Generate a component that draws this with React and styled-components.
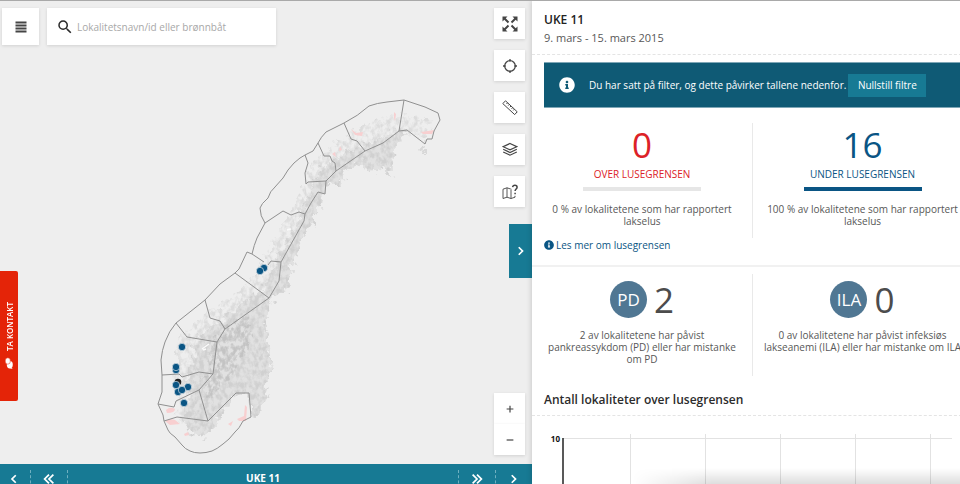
import React from "react";
import styled, { createGlobalStyle } from "styled-components";
import { MdSearch } from "react-icons/md";
import { FaInfoCircle } from "react-icons/fa";

const teal = "#177a94";
const blue = "#0a5584";
const red = "#dc2127";
const sidePadding = 12;

const GlobalStyle = createGlobalStyle`
  * {
    box-sizing: border-box;
  }
  body {
    margin: 0;
    overflow: hidden;
    font-family: "Open Sans", "Noto Sans", sans-serif;
    font-size: 10px;
    color: #575757;
  }
  button,
  input {
    font-family: inherit;
    font-size: inherit;
    border: 0;
    padding: 0;
  }
  button {
    cursor: pointer;
  }
  h1,
  h2,
  p {
    margin: 0;
  }
`;

const Page = styled.div`
  display: grid;
  grid-template-columns: minmax(0, 1fr) 440px;
  width: calc(100% + ${sidePadding}px);
  height: 100vh;
  border-top: 1px solid #a9a9a9;
  overflow: hidden;
`;

const MapColumn = styled.main`
  display: flex;
  flex-direction: column;
  min-height: 0;
`;

const MapArea = styled.div`
  position: relative;
  flex: 1;
  min-height: 0;
  background: #eeeeee;
`;

const MapDrawing = styled.svg`
  position: absolute;
  inset: 0;
  width: 100%;
  height: 100%;
`;

const MapOverlay = styled.div`
  position: absolute;
  inset: 0;
  display: flex;
  justify-content: space-between;
  align-items: flex-start;
  padding: 7px 7px 9px 2px;
`;

const SearchRow = styled.div`
  display: flex;
  gap: 8px;
`;

const ToolButton = styled.button`
  display: flex;
  align-items: center;
  justify-content: center;
  width: ${(props) => props.$size || 31}px;
  height: ${(props) => props.$size || 31}px;
  background: white;
  color: #454545;
  box-shadow: 0 1px 3px rgba(0, 0, 0, 0.12);
`;

const SearchBox = styled.label`
  display: flex;
  align-items: center;
  gap: 3px;
  width: 229px;
  height: 37px;
  padding: 0 9px;
  background: white;
  color: #2a2a2a;
  box-shadow: 0 1px 3px rgba(0, 0, 0, 0.12);
`;

const SearchInput = styled.input`
  flex: 1;
  min-width: 0;
  outline: 0;
  background: transparent;
  &::placeholder {
    color: #a8a8a8;
    opacity: 1;
  }
`;

const Tools = styled.div`
  display: flex;
  flex-direction: column;
  justify-content: space-between;
  height: 100%;
`;

const ToolGroup = styled.div`
  display: flex;
  flex-direction: column;
  gap: ${(props) => props.$gap}px;
`;

const PanelToggle = styled.button`
  position: absolute;
  right: 0;
  top: 223px;
  display: flex;
  align-items: center;
  justify-content: center;
  width: 23px;
  height: 54px;
  background: ${teal};
  color: white;
`;

const ContactTab = styled.button`
  position: absolute;
  left: 0;
  top: 270px;
  display: flex;
  align-items: center;
  justify-content: center;
  gap: 6px;
  width: 18px;
  height: 130px;
  border-radius: 2px 0 0 2px;
  background: #e42408;
  color: white;
  font-size: 8px;
  font-weight: 600;
  writing-mode: vertical-rl;
  transform: rotate(180deg);
`;

const WeekBar = styled.nav`
  display: flex;
  height: 20px;
  overflow: hidden;
  background: ${teal};
  color: white;
`;

const WeekStep = styled.button`
  display: flex;
  align-items: center;
  justify-content: center;
  width: ${(props) => props.$width || 36}px;
  height: 29px;
  background: transparent;
  color: white;
`;

const WeekDivider = styled.div`
  height: 29px;
  margin-top: 6px;
  border-left: 1px dashed #6fb0c0;
`;

const WeekLabel = styled.div`
  flex: 1;
  text-align: center;
  font-weight: 700;
  line-height: 28px;
`;

const Panel = styled.aside`
  position: relative;
  background: white;
  box-shadow: -1px 0 5px rgba(0, 0, 0, 0.15);
  overflow: hidden;
`;

const WeekHeader = styled.header`
  height: 54px;
  padding: 10px ${sidePadding}px 0;
  border-bottom: 1px dashed #e4e4e4;
`;

const Title = styled.h1`
  font-size: 12px;
  line-height: 18px;
  font-weight: 600;
  color: #222;
`;

const Dates = styled.p`
  font-size: 11px;
  line-height: 18px;
`;

const Notice = styled.div`
  display: flex;
  align-items: center;
  height: 46px;
  margin: 7px 0 0 ${sidePadding}px;
  padding-left: 15px;
  border: solid #7fa7b7;
  border-width: 1px 0;
  background: #0f5a75;
  color: white;
`;

const NoticeText = styled.span`
  margin: 0 2px 0 14px;
  white-space: nowrap;
`;

const ResetButton = styled.button`
  width: 78px;
  height: 23px;
  background: ${teal};
  color: white;
`;

const StatRow = styled.section`
  display: grid;
  grid-template-columns: 1fr 1fr;
  padding-top: ${(props) => props.$top}px;
`;

const Stat = styled.div`
  display: flex;
  flex-direction: column;
  align-items: center;
  height: ${(props) => props.$height}px;
  padding: 0 10px;
  text-align: center;
  & + & {
    border-left: 1px solid #e9e9e9;
  }
`;

const BigNumber = styled.div`
  font-size: 35px;
  line-height: 44px;
  color: ${(props) => props.$color || "#4c4c4c"};
`;

const StatLabel = styled.div`
  line-height: 14px;
  color: ${(props) => props.$color};
`;

const StatBar = styled.div`
  width: 118px;
  height: 4px;
  margin: 6px 0 12px;
  background: ${(props) => props.$color};
`;

const StatText = styled.p`
  line-height: 12px;
`;

const Disease = styled.div`
  display: flex;
  align-items: center;
  gap: 7px;
  height: 37px;
  margin: 7px 0 11px;
`;

const DiseaseBadge = styled.div`
  width: 37px;
  height: 37px;
  border-radius: 50%;
  background: #507793;
  color: white;
  font-size: 17px;
  line-height: 37px;
`;

const MoreLink = styled.a`
  display: flex;
  align-items: center;
  gap: 2px;
  height: 14px;
  padding-left: ${sidePadding}px;
  color: ${blue};
  text-decoration: none;
`;

const SectionLine = styled.div`
  height: 2px;
  margin-top: 13px;
  background: #f1f1f1;
`;

const ChartTitle = styled.h2`
  height: 40px;
  padding: 15px ${sidePadding}px 0;
  border-bottom: 1px dashed #e4e4e4;
  font-size: 12px;
  line-height: 18px;
  font-weight: 600;
  color: #2c2c2c;
`;

const Chart = styled.svg`
  display: block;
  width: 100%;
  height: 120px;
  text {
    font-size: 8px;
    font-weight: 700;
    fill: #111;
  }
`;

const BottomShade = styled.div`
  position: absolute;
  left: 100px;
  right: 0;
  bottom: 0;
  height: 16px;
  background: linear-gradient(transparent, rgba(0, 0, 0, 0.13));
  mask-image: linear-gradient(to right, transparent, black 80px);
`;

function Line({ size = 16, width = 1, children, ...rest }) {
  return (
    <svg
      width={size}
      height={size}
      viewBox="0 0 16 16"
      fill="none"
      stroke="currentColor"
      strokeWidth={width}
      {...rest}
    >
      {children}
    </svg>
  );
}

const MenuIcon = () => (
  <Line width={2}>
    <path d="M2.500 3.500h11M2.500 6.500h11M2.500 9.500h11M2.500 12.500h11" />
  </Line>
);

const ExpandIcon = () => (
  <Line width={2}>
    <path d="M2 2l4.500 4.500M14 2L9.500 6.500M2 14l4.500-4.500M14 14l-4.500-4.500" />
    <path
      d="M.5.500h5l-5 5zM15.500.500v5l-5-5zM.5 15.500v-5l5 5zM15.500 15.500h-5l5-5z"
      fill="currentColor"
      stroke="none"
    />
  </Line>
);

const TargetIcon = () => (
  <Line width={1.3}>
    <circle cx="8" cy="8" r="5.300" />
    <path d="M8 1v2.600M8 12.400V15M1 8h2.600M12.400 8H15" />
  </Line>
);

const RulerIcon = () => (
  <Line width={1}>
    <path d="M3.500.800L15.200 11.800l-2.500 2.800L.800 3.600z" />
    <path d="M5.600 2.800L4.500 4M7.300 4.400L6.200 5.600M9 6L7.900 7.200M10.700 7.600L9.600 8.800M12.400 9.200l-1.100 1.200" />
  </Line>
);

const LayersIcon = () => (
  <Line width={1.2}>
    <path d="M8 1.500l6.800 3.200L8 7.900 1.200 4.700z" />
    <path d="M1.200 7.300L8 10.500l6.800-3.200M1.200 10L8 13.200l6.800-3.200" />
  </Line>
);

const MapHelpIcon = () => (
  <Line width={0.9}>
    <path d="M9.500 5.300L8.600 5 5 3.800 1 5.200v9.300l4-1.300 4 1.300 4-1.300v-1.400M5 3.800v9.400M9 6v8.500" />
    <path
      d="M10.600 3.200c.2-1.500 1.200-2 2.300-2 1.300 0 2.200.8 2.200 2 0 1.700-2 1.900-2 3.800M13.100 8.800v1.500"
      strokeWidth="1.500"
    />
  </Line>
);

const ChevronRight = () => (
  <Line size={12} width={2.3}>
    <path d="M5 3L10 8 5 13" />
  </Line>
);

const ChevronLeft = () => (
  <Line size={12} width={2.3}>
    <path d="M9 3L4 8l5 5" />
  </Line>
);

const DoubleRight = () => (
  <Line size={14} width={2}>
    <path d="M3 3L8 8l-5 5M8 3L13 8 8 13" />
  </Line>
);

const DoubleLeft = () => (
  <Line size={14} width={2}>
    <path d="M8 3L3 8 8 13M13 3L8 8l5 5" />
  </Line>
);

const PlusIcon = () => (
  <Line size={12} width={1.6}>
    <path d="M8 3.500v9M3.500 8h9" />
  </Line>
);

const MinusIcon = () => (
  <Line size={12} width={1.6}>
    <path d="M3.500 8h9" />
  </Line>
);

const ChatIcon = () => (
  <svg width="8" height="12" viewBox="0 0 8 12" fill="currentColor">
    <ellipse cx="3.200" cy="4.200" rx="3" ry="3.700" />
    <path d="M1 1l-.5-1 3 1z" />
    <ellipse cx="5.200" cy="8" rx="2.600" ry="3.200" stroke="#e42408" strokeWidth=".5" />
  </svg>
);

// production area borders along the coast
const coast =
  "M305 155L313 151 318 143 Q321 137 326 132L344 123Q358 116 369 106Q377 103 387 102L404 100 425 107 438 113 440 120 434 131 432 139 427 139 425 144 407 130 399 131 383 143 365 151 336 171 326 181 325 194 318 192 311 203 305 214 304 221 281 262 279 281 269 298 225 329 217 342 213 374 199 390 208 421 236 393 249 393 251 417 243 421Q239 429 235 432Q229 440 223 444Q217 449 212 451Q206 453 200 453Q194 453 190 451Q185 449 182 445L175 437Q169 433 168 430L164 421 163 415 158 404 162 392 162 375 161 360Q162 350 165 342Q169 331 176 323L205 300 220 284 235 273 239 269 247 252 252 254Q254 245 257 238L265 223Q260 216 260 208Q261 204 268 198Q270 191 275 187L283 178 288 170Q294 162 300 158z";

const borders = [
  "M404 100L399 131",
  "M344 123L351 139 357 141 365 151",
  "M318 143L324 156 330 156 332 161 335 163 336 171",
  "M305 155L308 163 305 173 306 184 308 182 326 181",
  "M265 223L283 211 291 215 299 212 305 214",
  "M252 254L264 262M268 265L271 261 281 262",
  "M235 273L269 298",
  "M205 300L210 318 220 321 225 329",
  "M176 323L187 337 217 342",
  "M162 375L179 374 182 377 199 372 213 374",
  "M158 404L174 407 176 401 199 390",
  "M164 421L177 417 208 421",
];

// outer skerries, the mainland and the high ground inland
const skerries =
  "M176 340L190 326 212 310 238 292 256 276 266 254 280 228 296 206 304 178 314 160 328 150 346 136 372 122 398 114 424 118 432 126 424 140 406 130 383 143 365 151 336 171 326 184 318 200 300 235 285 275 272 300 232 330 217 345 213 375 206 432 188 432 178 416 176 392 172 376 178 362z";
const mainland =
  "M196 340L214 326 240 306 264 288 276 264 288 240 302 214 310 190 322 168 340 156 360 146 386 136 400 130 408 130 396 142 393 164 390 178 378 168 370 172 362 162 344 172 342 184 328 184 318 208 310 228 302 236 298 254 291 268 289 290 282 292 272 298 266 320 267 345 273 361 267 384 264 400 256 420 246 396 236 394 224 412 206 437 190 432 182 416 190 398 186 384 192 364z";
const highland =
  "M208 345L226 328 248 314 250 340 238 364 226 382 214 396 202 390 210 374z";

const sites = [
  [264, 268],
  [260, 271],
  [182, 347],
  [176, 370],
  [176, 367],
  [188, 387],
  [178, 392],
  [182, 390],
  [176, 385],
  [184, 403],
];

const NorwayMap = () => (
  <MapDrawing viewBox="0 1 532 463" role="img" aria-label="Kart over Norge">
    <defs>
      <filter id="ground" x="-10%" y="-10%" width="120%" height="120%">
        <feTurbulence type="fractalNoise" baseFrequency="0.16" numOctaves="4" seed="4" result="edge" />
        <feDisplacementMap in="SourceGraphic" in2="edge" scale="16" xChannelSelector="R" yChannelSelector="G" />
      </filter>
      <filter id="grain" x="-10%" y="-10%" width="120%" height="120%">
        <feTurbulence type="fractalNoise" baseFrequency="0.16" numOctaves="4" seed="4" result="edge" />
        <feDisplacementMap in="SourceGraphic" in2="edge" scale="16" xChannelSelector="R" yChannelSelector="G" result="shape" />
        <feTurbulence type="fractalNoise" baseFrequency="0.22 0.17" numOctaves="3" seed="9" />
        <feColorMatrix values="0 0 0 0 0  0 0 0 0 0  0 0 0 0 0  3 0 0 0 -1.1" result="speck" />
        <feComposite in="shape" in2="speck" operator="in" />
      </filter>
    </defs>
    <path filter="url(#grain)" fill="#dcdcdc" d={skerries} />
    <path filter="url(#ground)" fill="#dddddd" fillOpacity=".8" d={mainland} />
    <path filter="url(#grain)" fill="#d0d0d0" d={mainland} />
    <path filter="url(#grain)" fill="#c3c3c3" d={highland} />
    <path filter="url(#ground)" fill="#d8d8d8" d="M418 148L426 142 424 156z" />
    <g fill="#f8cfd0">
      <path d="M166 410q4-4 9-1 0 4-8 4zM165 421q5-3 10-1l5 4-10 1zM184 434l4-2 1 3-4 1zM228 424l5-3-2 5zM237 419l7-3 1-11 2 2-1 14-7 0zM351 129l5 4 7-1-1 4-7-1zM394 112l2 2-1 7-1-3zM421 132l7-1 6-1-2 4-9 0zM340 146l2 4-3 1zM332 154l3-2 1 5z" />
    </g>
    <g fill="none" stroke="#909090" strokeWidth="1" strokeLinejoin="round">
      <path d={coast} />
      {borders.map((d) => (
        <path key={d} d={d} />
      ))}
    </g>
    <path d="M202 349l7-5M203 350l3-1M287 230l4-1" stroke="#fafafa" strokeWidth="1.500" />
    <circle cx="178" cy="382" r="3.300" fill="#222" />
    <g fill={blue} stroke="#f4f4f4" strokeWidth=".6">
      {sites.map(([x, y]) => (
        <circle key={`${x}-${y}`} cx={x} cy={y} r="3.700" />
      ))}
    </g>
  </MapDrawing>
);

export default function App() {
  return (
    <>
      <GlobalStyle />
      <Page>
        <MapColumn>
          <MapArea>
            <NorwayMap />
            <MapOverlay>
              <SearchRow>
                <ToolButton $size={37} aria-label="Meny">
                  <MenuIcon />
                </ToolButton>
                <SearchBox>
                  <MdSearch size={18} />
                  <SearchInput
                    aria-label="Søk"
                    placeholder="Lokalitetsnavn/id eller brønnbåt"
                  />
                </SearchBox>
              </SearchRow>
              <Tools>
                <ToolGroup $gap={11}>
                  <ToolButton aria-label="Fullskjerm">
                    <ExpandIcon />
                  </ToolButton>
                  <ToolButton aria-label="Min posisjon">
                    <TargetIcon />
                  </ToolButton>
                  <ToolButton aria-label="Mål avstand">
                    <RulerIcon />
                  </ToolButton>
                  <ToolButton aria-label="Kartlag">
                    <LayersIcon />
                  </ToolButton>
                  <ToolButton aria-label="Tegnforklaring">
                    <MapHelpIcon />
                  </ToolButton>
                </ToolGroup>
                <ToolGroup $gap={0}>
                  <ToolButton aria-label="Zoom inn">
                    <PlusIcon />
                  </ToolButton>
                  <ToolButton aria-label="Zoom ut">
                    <MinusIcon />
                  </ToolButton>
                </ToolGroup>
              </Tools>
            </MapOverlay>
            <PanelToggle aria-label="Skjul panel">
              <ChevronRight />
            </PanelToggle>
            <ContactTab>
              <ChatIcon />
              TA KONTAKT
            </ContactTab>
          </MapArea>
          <WeekBar>
            <WeekStep $width={30} aria-label="Forrige uke">
              <ChevronLeft />
            </WeekStep>
            <WeekDivider />
            <WeekStep aria-label="Forrige år">
              <DoubleLeft />
            </WeekStep>
            <WeekDivider />
            <WeekLabel>UKE 11</WeekLabel>
            <WeekDivider />
            <WeekStep aria-label="Neste år">
              <DoubleRight />
            </WeekStep>
            <WeekDivider />
            <WeekStep aria-label="Neste uke">
              <ChevronRight />
            </WeekStep>
          </WeekBar>
        </MapColumn>
        <Panel>
          <WeekHeader>
            <Title>UKE 11</Title>
            <Dates>9. mars - 15. mars 2015</Dates>
          </WeekHeader>
          <Notice>
            <FaInfoCircle size={16} />
            <NoticeText>
              Du har satt på filter, og dette påvirker tallene nedenfor.
            </NoticeText>
            <ResetButton>Nullstill filtre</ResetButton>
          </Notice>
          <StatRow $top={15}>
            <Stat $height={115}>
              <BigNumber $color={red}>0</BigNumber>
              <StatLabel $color={red}>OVER LUSEGRENSEN</StatLabel>
              <StatBar $color="#e6e6e6" />
              <StatText>0 % av lokalitetene som har rapportert lakselus</StatText>
            </Stat>
            <Stat $height={115}>
              <BigNumber $color={blue}>16</BigNumber>
              <StatLabel $color={blue}>UNDER LUSEGRENSEN</StatLabel>
              <StatBar $color={blue} />
              <StatText>100 % av lokalitetene som har rapportert lakselus</StatText>
            </Stat>
          </StatRow>
          <MoreLink href="#lusegrensen">
            <FaInfoCircle size={10} />
            Les mer om lusegrensen
          </MoreLink>
          <SectionLine />
          <StatRow $top={7}>
            <Stat $height={102}>
              <Disease>
                <DiseaseBadge>PD</DiseaseBadge>
                <BigNumber>2</BigNumber>
              </Disease>
              <StatText>
                2 av lokalitetene har påvist pankreassykdom (PD) eller har
                mistanke om PD
              </StatText>
            </Stat>
            <Stat $height={102}>
              <Disease>
                <DiseaseBadge>ILA</DiseaseBadge>
                <BigNumber>0</BigNumber>
              </Disease>
              <StatText>
                0 av lokalitetene har påvist infeksiøs lakseanemi (ILA) eller
                har mistanke om ILA
              </StatText>
            </Stat>
          </StatRow>
          <ChartTitle>Antall lokaliteter over lusegrensen</ChartTitle>
          <Chart viewBox="0 0 440 120">
            <path
              d="M31 22.500H420M98.500 18V120M173.500 18V120M248.500 18V120M323.500 18V120M398.500 18V120"
              stroke="#e2e2e2"
              fill="none"
            />
            <path d="M31 22V120" stroke="#222" strokeWidth="1.500" />
            <text x="28" y="26" textAnchor="end">
              10
            </text>
          </Chart>
          <BottomShade />
        </Panel>
      </Page>
    </>
  );
}
